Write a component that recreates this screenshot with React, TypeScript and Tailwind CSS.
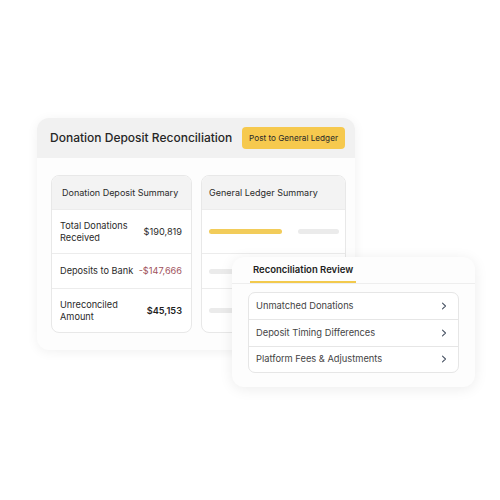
import React from 'react';

const Chevron = () => (
  <svg width="8" height="8" viewBox="0 0 8 8" fill="none" className="text-gray-600">
    <path d="M2.5 1.2 5.5 4l-3 2.8" stroke="currentColor" strokeWidth="1.1" strokeLinecap="round" strokeLinejoin="round" />
  </svg>
);

const SummaryRow = ({ label, value, valueClass, className }: { label: React.ReactNode; value: string; valueClass: string; className: string }) => (
  <div className={`flex items-center justify-between pl-2 pr-[9px] border-t border-[#ececec] ${className}`}>
    <span className="text-[9.2px] leading-[12px] text-[#2a2a2a] whitespace-nowrap">{label}</span>
    <span className={`text-[9.2px] whitespace-nowrap ${valueClass}`}>{value}</span>
  </div>
);

const App: React.FC = () => {
  const reviewItems = ['Unmatched Donations', 'Deposit Timing Differences', 'Platform Fees & Adjustments'];

  return (
    <div className="relative w-[500px] h-[500px] bg-white font-['Inter',sans-serif]">
      <div className="pt-[118px] pl-[37px]">
        <div className="w-[318px] h-[232px] rounded-[12px] bg-[#fdfdfd] shadow-[0_2px_12px_rgba(0,0,0,0.06)] overflow-hidden">
          <div className="h-[40px] bg-[#f1f1f1] flex items-center justify-between pl-[13px] pr-[10px]">
            <span className="text-[12px] font-medium text-[#262626] whitespace-nowrap">Donation Deposit Reconciliation</span>
            <button className="h-[22px] px-[7px] rounded-[4px] bg-[#f6c94e] text-[8.2px] text-[#2a2a2a] whitespace-nowrap">Post to General Ledger</button>
          </div>
          <div className="flex gap-[9px] pl-[14px] pt-[17px]">
            <div className="w-[141px] h-[158px] rounded-[8px] border border-[#e8e8e8] bg-white overflow-hidden flex flex-col">
              <div className="h-[33px] bg-[#f3f3f3] flex items-center pl-[10px] text-[9px] text-[#2a2a2a] whitespace-nowrap">Donation Deposit Summary</div>
              <SummaryRow className="h-[44px]" label={<>Total Donations<br />Received</>} value="$190,819" valueClass="text-[#2a2a2a]" />
              <SummaryRow className="h-[35px]" label="Deposits to Bank" value="-$147,666" valueClass="text-[#a0525c]" />
              <SummaryRow className="flex-1" label={<>Unreconciled<br />Amount</>} value="$45,153" valueClass="font-semibold text-[#1f1f1f]" />
            </div>
            <div className="w-[145px] h-[158px] rounded-[8px] border border-[#e8e8e8] bg-white overflow-hidden flex flex-col">
              <div className="h-[33px] bg-[#f3f3f3] flex items-center pl-[7px] text-[9px] text-[#2a2a2a] whitespace-nowrap">General Ledger Summary</div>
              <div className="h-[44px] border-t border-[#ececec] flex items-center gap-[16px] pl-[7px]">
                <div className="w-[73px] h-[5px] rounded-full bg-[#f2cc5a]" />
                <div className="w-[41px] h-[5px] rounded-full bg-[#ebebeb]" />
              </div>
              <div className="h-[35px] border-t border-[#ececec] flex items-center pl-[7px]">
                <div className="w-[30px] h-[5px] rounded-full bg-[#ebebeb]" />
              </div>
              <div className="flex-1 border-t border-[#ececec] flex items-center pl-[7px]">
                <div className="w-[30px] h-[5px] rounded-full bg-[#ebebeb]" />
              </div>
            </div>
          </div>
        </div>
      </div>

      <div className="absolute left-[232px] top-[257px] w-[243px] h-[130px] rounded-[12px] bg-[#fdfdfd] shadow-[0_2px_14px_rgba(0,0,0,0.08)]">
        <div className="h-[27px] border-b border-[#eeeeee] pl-[18px] flex items-end">
          <div className="border-b-2 border-[#f2c94c] px-[3px] pb-[4px] text-[9.5px] font-semibold text-[#222] whitespace-nowrap">Reconciliation Review</div>
        </div>
        <div className="mx-[16px] mt-[8px] rounded-[7px] border border-[#e6e6e6] bg-white overflow-hidden">
          {reviewItems.map((item, i) => (
            <div key={item} className={`h-[26.3px] flex items-center justify-between pl-[7px] pr-[10px] ${i > 0 ? 'border-t border-[#e6e6e6]' : ''}`}>
              <span className="text-[9.3px] text-[#444] whitespace-nowrap">{item}</span>
              <Chevron />
            </div>
          ))}
        </div>
      </div>
    </div>
  );
};

export default App;
